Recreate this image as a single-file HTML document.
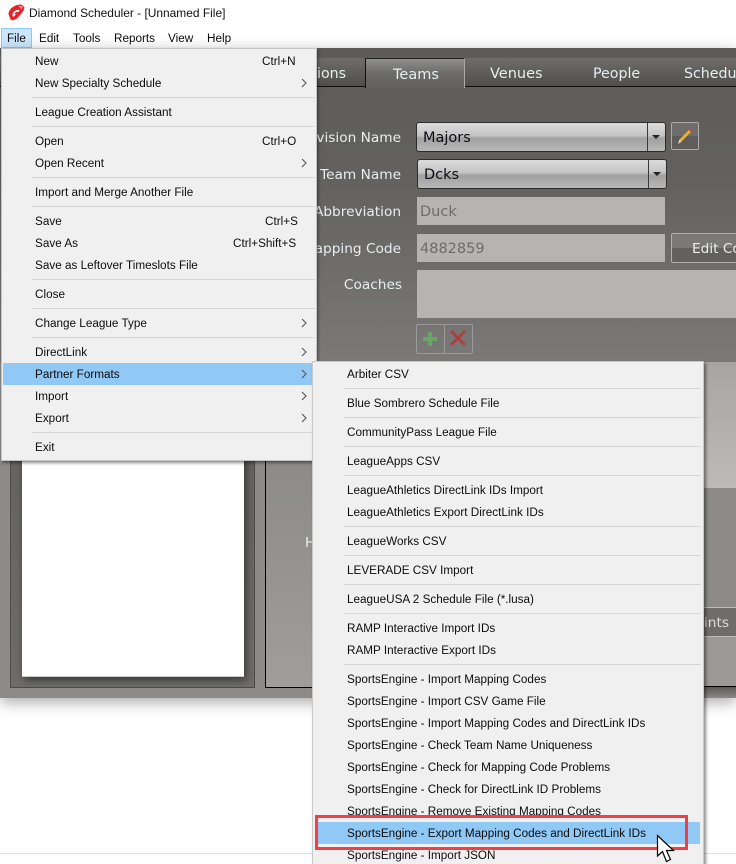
<!DOCTYPE html>
<html>
<head>
<meta charset="utf-8">
<style>
html,body{margin:0;padding:0;background:#fff;}
#r{position:relative;width:736px;height:864px;overflow:hidden;background:#fff;font-family:"Liberation Sans",sans-serif;}
#r div,#r span{position:absolute;white-space:nowrap;box-sizing:border-box;}
.m{font-size:11.72px;color:#0c0c0c;line-height:22px;height:22px;margin-top:1px;}
.s{height:1px;background:#d6d6d6;}
.f{font-family:"DejaVu Sans",sans-serif;font-size:14.5px;line-height:20px;height:20px;color:#e8eef0;}
.l{font-family:"DejaVu Sans",sans-serif;font-size:13.7px;line-height:20px;height:20px;color:#e8eef0;right:335px;text-align:right;}
.i{background:#b5b4b3;}
.c{background:linear-gradient(#dcdcdc 0,#c4c4c4 45%,#a0a0a0 55%,#b8b8b8 100%);border:1px solid #2c2c2c;border-radius:3px;}
.dv{background:#3a3a3a;width:1px;}
.ar{width:0;height:0;border-left:4px solid transparent;border-right:4px solid transparent;border-top:4px solid #222;}
.t{font-family:"DejaVu Sans",sans-serif;font-size:14.2px;color:#e6eef0;line-height:20px;height:20px;}
</style>
</head>
<body>
<div id="r">
<!-- title bar -->
<svg style="position:absolute;left:8px;top:4px" width="17" height="17" viewBox="0 0 17 17"><path d="M0.500 10 C1 5 6 0.500 13 0.500 L16.500 3 C16 8 12.500 10.500 9 14.500 L5 16.500 L2.500 15.500 Z" fill="#e0252c"/><path d="M4.500 11.500 C4.500 7.500 8 5.500 11.500 6 L10.500 8 C8.500 7.500 7 8.500 6.500 10 L8 10.500 L5 13 Z" fill="#fff"/><path d="M10 1.500 L15 2.500 L13.500 5.500 Z" fill="#f58a8a"/></svg>
<div style="left:29px;top:3px;font-size:11.95px;line-height:20px;color:#111">Diamond Scheduler - [Unnamed File]</div>
<!-- menu bar -->
<div style="left:1px;top:28px;width:31px;height:20px;background:#cce6fb;border:1px solid #90c8f6"></div>
<div class="m" style="left:7px;top:27px">File</div>
<div class="m" style="left:39px;top:27px">Edit</div>
<div class="m" style="left:73px;top:27px">Tools</div>
<div class="m" style="left:114px;top:27px">Reports</div>
<div class="m" style="left:168px;top:27px">View</div>
<div class="m" style="left:207px;top:27px">Help</div>

<!-- app bg -->
<div style="left:0;top:48px;width:736px;height:650px;background:linear-gradient(#5c5b59 0,#62615f 20%,#7a7977 48%,#8a8987 70%,#8e8d8b 100%);box-shadow:0 4px 14px rgba(0,0,0,.35);border-bottom:1px solid #6a6a6a"></div>
<!-- tabs -->
<div style="left:0;top:58px;width:736px;height:29px;background:linear-gradient(#6e6d6b,#4f4e4c);border-bottom:1px solid #111"></div>
<div style="left:365px;top:58px;width:100px;height:30px;background:linear-gradient(#8f8f8d 0,#6c6b69 50%,#62615f 100%);border-top:1px solid #222;border-right:1px solid #aaa;border-left:1px solid #111"></div>
<div class="t" style="left:317px;top:64px">ions</div>
<div class="t" style="left:393px;top:65px;font-size:14.5px">Teams</div>
<div class="t" style="left:490px;top:64px;font-size:14.5px">Venues</div>
<div class="t" style="left:593px;top:64px">People</div>
<div class="t" style="left:684px;top:64px">Schedu</div>

<!-- form -->
<div class="l" style="top:128px">vision Name</div>
<div class="l" style="top:165px">Team Name</div>
<div class="l" style="top:202px">Abbreviation</div>
<div class="l" style="top:239px">apping Code</div>
<div class="l" style="top:275px;right:334px">Coaches</div>

<div class="c" style="left:416px;top:122px;width:250px;height:30px"></div>
<div class="dv" style="left:647px;top:123px;height:28px"></div>
<div class="ar" style="left:652px;top:135px"></div>
<div class="f" style="left:423px;top:128px;color:#0c0c14">Majors</div>

<div style="left:671px;top:122px;width:28px;height:28px;border:1px solid #aaa;border-radius:2px;background:linear-gradient(#6e6d6b 50%,#5e5d5b 50%)"></div>
<svg style="position:absolute;left:675px;top:126px" width="20" height="20" viewBox="0 0 20 20"><path d="M3 18 L4.500 13.500 L14 4 L16 6 L6.500 15.500 Z" fill="#eeb030"/><path d="M14 4 L15.500 2.500 L17.500 4.500 L16 6 Z" fill="#e23a3a"/><path d="M3 18 L4.500 13.500 L6.500 15.500 Z" fill="#e8d8b0"/></svg>

<div class="c" style="left:417px;top:159px;width:250px;height:30px"></div>
<div class="dv" style="left:648px;top:160px;height:28px"></div>
<div class="ar" style="left:653px;top:172px"></div>
<div class="f" style="left:424px;top:165px;color:#0c0c14">Dcks</div>

<div class="i" style="left:417px;top:197px;width:248px;height:28px"></div>
<div class="f" style="left:420px;top:202px;color:#6c6c6c">Duck</div>
<div class="i" style="left:417px;top:234px;width:248px;height:28px"></div>
<div class="f" style="left:420px;top:239px;color:#6c6c6c">4882859</div>
<div style="left:671px;top:233px;width:70px;height:30px;border:1px solid #b0b0b0;border-radius:2px;background:linear-gradient(#7a7977 50%,#62615f 50%)"></div>
<div class="l" style="left:692px;right:auto;text-align:left;top:239px">Edit Co</div>
<div class="i" style="left:417px;top:270px;width:319px;height:48px"></div>

<div style="left:416px;top:324px;width:29px;height:30px;border:1px solid #9a9a98;border-radius:2px"></div>
<div style="left:444px;top:324px;width:29px;height:30px;border:1px solid #9a9a98;border-radius:2px"></div>
<svg style="position:absolute;left:421px;top:331px" width="18" height="16" viewBox="0 0 18 16"><path d="M7 1 H11 V6 H16 V10 H11 V15 H7 V10 H2 V6 H7 Z" fill="#6aa466"/></svg>
<svg style="position:absolute;left:449px;top:329px" width="18" height="18" viewBox="0 0 18 18"><path d="M2 2 L16 16 M16 2 L2 16" stroke="#ab3f42" stroke-width="3"/></svg>

<!-- lower panels -->
<div style="left:0;top:362px;width:736px;height:336px;background:#8c8b89"></div>
<div style="left:10px;top:362px;width:245px;height:326px;background:linear-gradient(#62615f,#6e6d6b);border:1px solid #4c4c4c"></div>
<div style="left:22px;top:440px;width:222px;height:237px;background:#fff;border-bottom:1px solid #ccc;box-shadow:2px 3px 8px rgba(0,0,0,.5)"></div>
<div style="left:265px;top:362px;width:480px;height:326px;border:1px solid #000;background:linear-gradient(#8a8987 0,#8e8d8b 40%,#a09e9c 100%)"></div>
<div style="left:703px;top:362px;width:33px;height:126px;background:linear-gradient(#a6a5a3,#bcbbb9)"></div>
<div style="left:703px;top:488px;width:33px;height:119px;background:#8b8a88"></div>
<div style="left:703px;top:607px;width:33px;height:30px;background:#6e6d6b;border-top:1px solid #bbb;border-bottom:1px solid #bbb"></div>
<div style="left:703px;top:637px;width:33px;height:49px;background:#9b9a98"></div>
<div style="left:703px;top:686px;width:33px;height:1px;background:#000"></div>
<div style="left:703px;top:687px;width:33px;height:11px;background:linear-gradient(#5a5a58,#8a8987)"></div>
<div class="l" style="left:704px;right:auto;text-align:left;top:613px;color:#ddd">ints</div>
<div class="l" style="left:305px;right:auto;text-align:left;top:533px">H</div>

<!-- bottom line -->
<div style="left:0;top:853px;width:736px;height:1px;background:#e0e0e0"></div>

<!-- file menu -->
<div style="left:1px;top:48px;width:316px;height:413px;background:#f0f0f0;border:1px solid #c4c4c4;box-shadow:1px 2px 3px rgba(0,0,0,.45)"></div>
<div style="left:3px;top:363px;width:310px;height:22px;background:#90c8f6"></div>
<div class="m" style="left:35px;top:50px">New</div><div class="m" style="left:262px;top:50px">Ctrl+N</div>
<div class="m" style="left:35px;top:72px">New Specialty Schedule</div>
<div class="s" style="left:32px;top:97px;width:283px"></div>
<div class="m" style="left:35px;top:101px">League Creation Assistant</div>
<div class="s" style="left:32px;top:126px;width:283px"></div>
<div class="m" style="left:35px;top:130px">Open</div><div class="m" style="left:262px;top:130px">Ctrl+O</div>
<div class="m" style="left:35px;top:152px">Open Recent</div>
<div class="s" style="left:32px;top:177px;width:283px"></div>
<div class="m" style="left:35px;top:181px">Import and Merge Another File</div>
<div class="s" style="left:32px;top:206px;width:283px"></div>
<div class="m" style="left:35px;top:210px">Save</div><div class="m" style="left:265px;top:210px">Ctrl+S</div>
<div class="m" style="left:35px;top:232px">Save As</div><div class="m" style="left:233px;top:232px">Ctrl+Shift+S</div>
<div class="m" style="left:35px;top:254px">Save as Leftover Timeslots File</div>
<div class="s" style="left:32px;top:279px;width:283px"></div>
<div class="m" style="left:35px;top:283px">Close</div>
<div class="s" style="left:32px;top:308px;width:283px"></div>
<div class="m" style="left:35px;top:312px">Change League Type</div>
<div class="s" style="left:32px;top:337px;width:283px"></div>
<div class="m" style="left:35px;top:341px">DirectLink</div>
<div class="m" style="left:35px;top:363px">Partner Formats</div>
<div class="m" style="left:35px;top:385px">Import</div>
<div class="m" style="left:35px;top:407px">Export</div>
<div class="s" style="left:32px;top:432px;width:283px"></div>
<div class="m" style="left:35px;top:436px">Exit</div>
<svg style="position:absolute;left:300px;top:70px" width="8" height="360" viewBox="0 0 8 360" fill="none" stroke="#555" stroke-width="1.100"><path d="M2 9 L6 13 L2 17"/><path d="M2 89 L6 93 L2 97"/><path d="M2 249 L6 253 L2 257"/><path d="M2 278 L6 282 L2 286"/><path d="M2 300 L6 304 L2 308"/><path d="M2 322 L6 326 L2 330"/><path d="M2 344 L6 348 L2 352"/></svg>

<!-- submenu -->
<div style="left:312px;top:361px;width:392px;height:510px;background:#f0f0f0;border:1px solid #c8c8c8;box-shadow:2px 2px 3px rgba(0,0,0,.45)"></div>
<div style="left:316px;top:822px;width:384px;height:22px;background:#90c8f6"></div>
<div class="m" style="left:347px;top:363px">Arbiter CSV</div>
<div class="s" style="left:344px;top:388px;width:357px"></div>
<div class="m" style="left:347px;top:392px">Blue Sombrero Schedule File</div>
<div class="s" style="left:344px;top:417px;width:357px"></div>
<div class="m" style="left:347px;top:421px">CommunityPass League File</div>
<div class="s" style="left:344px;top:446px;width:357px"></div>
<div class="m" style="left:347px;top:450px">LeagueApps CSV</div>
<div class="s" style="left:344px;top:475px;width:357px"></div>
<div class="m" style="left:347px;top:479px">LeagueAthletics DirectLink IDs Import</div>
<div class="m" style="left:347px;top:501px">LeagueAthletics Export DirectLink IDs</div>
<div class="s" style="left:344px;top:526px;width:357px"></div>
<div class="m" style="left:347px;top:530px">LeagueWorks CSV</div>
<div class="s" style="left:344px;top:555px;width:357px"></div>
<div class="m" style="left:347px;top:559px">LEVERADE CSV Import</div>
<div class="s" style="left:344px;top:584px;width:357px"></div>
<div class="m" style="left:347px;top:588px">LeagueUSA 2 Schedule File (*.lusa)</div>
<div class="s" style="left:344px;top:613px;width:357px"></div>
<div class="m" style="left:347px;top:617px">RAMP Interactive Import IDs</div>
<div class="m" style="left:347px;top:639px">RAMP Interactive Export IDs</div>
<div class="s" style="left:344px;top:664px;width:357px"></div>
<div class="m" style="left:347px;top:668px">SportsEngine - Import Mapping Codes</div>
<div class="m" style="left:347px;top:690px">SportsEngine - Import CSV Game File</div>
<div class="m" style="left:347px;top:712px">SportsEngine - Import Mapping Codes and DirectLink IDs</div>
<div class="m" style="left:347px;top:734px">SportsEngine - Check Team Name Uniqueness</div>
<div class="m" style="left:347px;top:756px">SportsEngine - Check for Mapping Code Problems</div>
<div class="m" style="left:347px;top:778px">SportsEngine - Check for DirectLink ID Problems</div>
<div class="m" style="left:347px;top:800px">SportsEngine - Remove Existing Mapping Codes</div>
<div class="m" style="left:347px;top:822px">SportsEngine - Export Mapping Codes and DirectLink IDs</div>
<div class="m" style="left:347px;top:844px">SportsEngine - Import JSON</div>

<!-- red highlight -->
<div style="left:315px;top:815px;width:373px;height:35px;border:3px solid #f04045"></div>
<!-- cursor -->
<svg style="position:absolute;left:656px;top:834px" width="20" height="30" viewBox="0 0 20 30"><path d="M1.500 1.500 L1.500 22 L6.500 17.500 L10.500 27.500 L14.500 25.500 L10.500 16.500 L17.500 16.500 Z" fill="#fff" stroke="#000" stroke-width="1.200"/></svg>
</div>
</body>
</html>
